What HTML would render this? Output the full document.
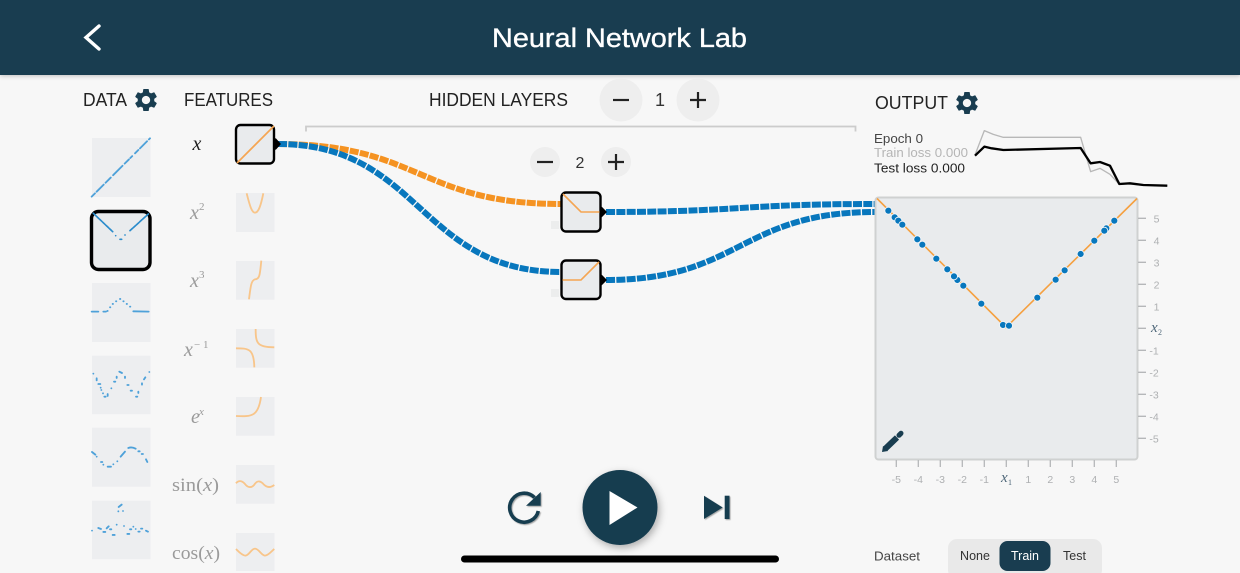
<!DOCTYPE html>
<html><head><meta charset="utf-8"><title>Neural Network Lab</title>
<style>
html,body{margin:0;padding:0;width:1240px;height:573px;overflow:hidden;background:#f7f7f7}
svg{display:block}
text{font-family:"Liberation Sans",sans-serif}
.m{font-family:"Liberation Serif",serif;font-style:italic;fill:#9a9a9a;font-size:20px}
.r{font-family:"Liberation Serif",serif;fill:#9a9a9a;font-size:19px}
.t{fill:#aeb0b2;font-size:10.5px;text-anchor:middle}
.h{fill:#222;font-size:18px}
.s{fill:#444;font-size:13px}
.w{fill:none;stroke-width:6;stroke-dasharray:9 1.3}
.c{fill:none;stroke:#f8c58a;stroke-width:5.5}
.d{fill:none;stroke:#4ea1d9;stroke-width:5.5;stroke-linecap:round}
</style></head><body>
<svg width="1240" height="573" viewBox="0 0 1240 573" xmlns="http://www.w3.org/2000/svg">
<defs>
<filter id="sh" x="-30%" y="-30%" width="160%" height="160%"><feDropShadow dx="2" dy="3" stdDeviation="4" flood-color="#000" flood-opacity=".3"/></filter>
<filter id="sm" x="-30%" y="-30%" width="160%" height="160%"><feDropShadow dx="1" dy="1" stdDeviation=".6" flood-color="#000" flood-opacity=".35"/></filter>
<path id="gear" d="M19.14,12.94c0.04-0.3,0.06-0.61,0.06-0.94c0-0.32-0.02-0.64-0.07-0.94l2.03-1.58c0.18-0.14,0.23-0.41,0.12-0.61l-1.92-3.32c-0.12-0.22-0.37-0.29-0.59-0.22l-2.39,0.96c-0.5-0.38-1.03-0.7-1.62-0.94L14.4,2.81c-0.04-0.24-0.24-0.41-0.48-0.41h-3.84c-0.24,0-0.43,0.17-0.47,0.41L9.25,5.35C8.66,5.59,8.12,5.92,7.63,6.29L5.24,5.33c-0.22-0.08-0.47,0-0.59,0.22L2.74,8.87C2.62,9.08,2.66,9.34,2.86,9.48l2.03,1.58C4.84,11.36,4.8,11.69,4.8,12s0.02,0.64,0.07,0.94l-2.03,1.58c-0.18,0.14-0.23,0.41-0.12,0.61l1.92,3.32c0.12,0.22,0.37,0.29,0.59,0.22l2.39-0.96c0.5,0.38,1.03,0.7,1.62,0.94l0.36,2.54c0.05,0.24,0.24,0.41,0.48,0.41h3.84c0.24,0,0.44-0.17,0.47-0.41l0.36-2.54c0.59-0.24,1.13-0.56,1.62-0.94l2.39,0.96c0.22,0.08,0.47,0,0.59-0.22l1.92-3.32c0.12-0.22,0.07-0.47-0.12-0.61L19.14,12.94z M12,15.6c-1.98,0-3.6-1.62-3.6-3.6s1.62-3.6,3.6-3.6s3.6,1.62,3.6,3.6S13.98,15.6,12,15.6z"/>
</defs>

<rect width="1240" height="573" fill="#f7f7f7"/>
<rect x="0" y="0" width="1240" height="75" fill="#193d50" style="filter:drop-shadow(0 1px 2px rgba(0,0,0,.22))"/>
<path d="M99,26 L86,37.500 L99,49" fill="none" stroke="#fff" stroke-width="3.400" stroke-linecap="round"/>
<text x="492" y="47" fill="#fff" font-size="27" stroke="#fff" stroke-width=".35" textLength="255" lengthAdjust="spacingAndGlyphs">Neural Network Lab</text>

<text class="h" x="83" y="106" textLength="44" lengthAdjust="spacingAndGlyphs">DATA</text>
<use href="#gear" fill="#193d50" transform="translate(132.200,86.200) scale(1.150)"/>
<text class="h" x="184" y="106" textLength="89" lengthAdjust="spacingAndGlyphs">FEATURES</text>
<text class="h" x="429" y="106" textLength="139" lengthAdjust="spacingAndGlyphs">HIDDEN LAYERS</text>
<text class="h" x="875" y="109" textLength="73" lengthAdjust="spacingAndGlyphs">OUTPUT</text>
<use href="#gear" fill="#193d50" transform="translate(953.200,89.200) scale(1.150)"/>

<!-- data thumbs -->
<g fill="#edeef0">
<rect x="92" y="138" width="58.500" height="59"/>
<rect x="92" y="283" width="58.500" height="59"/>
<rect x="92" y="355.700" width="58.500" height="58.500"/>
<rect x="92" y="427.700" width="58.500" height="59"/>
<rect x="92" y="500.700" width="58.500" height="58.500"/>
</g>
<rect x="91.500" y="211.500" width="58.500" height="58" rx="7" fill="#e9ebed" stroke="#000" stroke-width="3.400"/>
<g transform="translate(70,80) scale(.3333)">
<path class="d" stroke-width="4" stroke-dasharray="14 7 30 8 22 10 40 9 18 6 8 12" stroke-linecap="butt" d="M65,350 L240,175"/>
<path d="M70,400 L128,455 M137,467h.1 M150,478h5 M165,465h.1 M180,452 L235,402" fill="none" stroke="#2b8ccc" stroke-width="5" stroke-dasharray="10 3" stroke-linecap="round"/>
<path class="d" d="M65,695h20 M100,695h8 M112,693h1 M120,682h1 M128,672h1 M138,664h1 M150,657h1 M160,664h1 M170,672h1 M180,680h1 M190,694 L236,695"/>
</g>
<g transform="translate(70,320) scale(.3333)">
<path class="d" d="M70,161h.1 M80,175v6 M85,192h6 M92,203h.1 M94,210h.1 M99,220h.1 M103,230h4 M113,222v6 M124,205h.1 M132,185h4 M140,170v4 M148,155l8,4 M165,170v4 M172,195h4 M182,212h4 M198,230h4 M205,215v4 M216,190v4 M222,178l4,-6 M238,156h.1"/>
<path class="d" d="M66,396l10,8 M80,410h.1 M93,426h4 M100,434h.1 M113,440h10 M130,433h.1 M142,424h.1 M152,410 L165,395 M175,384 Q185,380 197,386 M205,394h4 M215,402h4 M228,418l4,8"/>
<path class="d" d="M66,632h.1 M85,624l8,3 M100,636h6 M110,625l6,-6 M120,628h4 M128,645h6 M140,614h.1 M162,618h.1 M172,642h6 M180,628h4 M190,620h.1 M197,627h.1 M205,635h4 M213,626h4 M228,632l6,3 M146,561l9,-7 M145,574h.1 M159,573h.1"/>
</g>

<!-- features -->
<text class="m" x="197" y="150" text-anchor="middle" style="fill:#222">x</text>
<text class="m" x="190" y="219">x</text><text class="r" x="199" y="210" style="font-size:11px">2</text>
<text class="m" x="190" y="287">x</text><text class="r" x="199" y="278" style="font-size:11px">3</text>
<text class="m" x="184" y="356">x</text><text class="r" x="194" y="348" style="font-size:11px">− 1</text>
<text class="m" x="191" y="423">e</text><text class="m" x="199" y="415" style="font-size:11px">x</text>
<text class="r" x="172" y="491" textLength="47" lengthAdjust="spacingAndGlyphs">sin(<tspan font-style="italic">x</tspan>)</text>
<text class="r" x="172" y="559" textLength="48" lengthAdjust="spacingAndGlyphs">cos(<tspan font-style="italic">x</tspan>)</text>

<g fill="#edeef0">
<rect x="236" y="193" width="38.500" height="39"/>
<rect x="236" y="261" width="38.500" height="38.700"/>
<rect x="236" y="329" width="38.500" height="38.700"/>
<rect x="236" y="397" width="38.500" height="38.700"/>
<rect x="236" y="465" width="38.500" height="38.700"/>
<rect x="236" y="533" width="38.500" height="38"/>
</g>
<g transform="translate(70,80) scale(.3333)">
<path class="c" d="M530,340 C540,380 546,398 555,398 C565,398 572,380 580,340"/>
<path class="c" d="M537,658 C542,620 543,602 555,598 C570,598 570,580 574,542"/>
</g>
<g transform="translate(70,320) scale(.3333)">
<path class="c" d="M498,85 C535,85 552,85 553,142"/>
<path class="c" d="M557,27 C557,70 562,82 613,82"/>
<path class="c" d="M498,288 C545,290 565,290 573,231"/>
<path class="c" d="M498,490 C506,480 516,482 525,492 C533,503 545,505 553,494 C562,480 572,482 582,494 C592,504 602,503 613,495"/>
<path class="c" d="M498,687 C506,695 516,706 526,707 C538,706 544,686 555,686 C566,686 574,706 585,707 C596,706 604,694 613,687"/>
</g>

<!-- bracket -->
<path d="M306,131.500V126.500H855.500V131.500" fill="none" stroke="#ccc" stroke-width="1.800"/>

<!-- stepper -->
<g fill="#eee"><circle cx="621" cy="100" r="21.500"/><circle cx="698" cy="100" r="21.500"/><circle cx="545" cy="162" r="15"/><circle cx="616" cy="162" r="15"/></g>
<g stroke="#222" stroke-width="2.200" fill="none">
<path d="M613,100H629"/><path d="M690,100H706M698,92V108"/>
<path d="M537,162H553"/><path d="M608,162H624M616,154V170"/>
</g>
<text x="660" y="106" font-size="18" fill="#333" text-anchor="middle">1</text>
<text x="580" y="168" font-size="16" fill="#333" text-anchor="middle">2</text>

<!-- wires -->
<path class="w" stroke="#f59322" d="M278,144 C420,144 420,204 561,204"/>
<path class="w" stroke="#0877bd" d="M278,144 C420,144 420,272 561,272"/>
<path class="w" stroke="#0877bd" d="M606,212 C740,212 740,204 875,204"/>
<path class="w" stroke="#0877bd" d="M606,280 C740,280 740,212 875,212"/>

<!-- x node -->
<rect x="236" y="125" width="38" height="38.500" rx="4.500" fill="#e9ebed" stroke="#000" stroke-width="2.400"/>
<path d="M237,163 L274,126" stroke="#f5a552" stroke-width="1.700"/>
<path d="M275.500,139 L280,144 L275.500,149Z" fill="#000" stroke="#000" stroke-width="1.500" stroke-linejoin="round"/>

<!-- hidden nodes -->
<rect x="551" y="221" width="8" height="8" fill="#eceded"/>
<rect x="551" y="289" width="8" height="8" fill="#eceded"/>
<rect x="561.500" y="192.500" width="39" height="39" rx="4.500" fill="#e9ebed" stroke="#000" stroke-width="2.400"/>
<rect x="561.500" y="260.500" width="39" height="38.500" rx="4.500" fill="#e9ebed" stroke="#000" stroke-width="2.400"/>
<path d="M563,194 L581,212 H599.500" fill="none" stroke="#f5a552" stroke-width="1.600"/>
<path d="M562.500,280 H581 L599,262" fill="none" stroke="#f5a552" stroke-width="1.600"/>
<path d="M601.500,207.500 L606,212 L601.500,216.500Z M601.500,275.500 L606,280 L601.500,284.500Z" fill="#000" stroke="#000" stroke-width="1.500" stroke-linejoin="round"/>

<!-- output chart -->
<text class="s" x="874" y="143" textLength="49" lengthAdjust="spacingAndGlyphs">Epoch 0</text>
<text class="s" x="874" y="157" textLength="94" lengthAdjust="spacingAndGlyphs" style="fill:#b5b5b5">Train loss 0.000</text>
<text class="s" x="874" y="172.500" textLength="91" lengthAdjust="spacingAndGlyphs" style="fill:#222">Test loss 0.000</text>
<g transform="translate(860,85) scale(.3333)" fill="none" stroke-linejoin="round">
<path stroke="#b8b8b8" stroke-width="4" d="M345,210 L373,137 L400,148 L430,157 L662,157 L692,260 L720,250 L750,268 L778,298 L800,296 L840,300 L922,302"/>
<path stroke="#000" stroke-width="7" d="M345,212 L373,185 L395,190 L430,195 L662,189 L692,235 L720,231 L750,242 L778,297 L810,295 L850,300 L922,302"/>
</g>

<!-- plot -->
<rect x="875.500" y="197.500" width="262" height="262" rx="3" fill="#e9ebed" stroke="#cfd1d1" stroke-width="2"/>
<path d="M877,198.500 L1006,327.500 L1137,198.500" fill="none" stroke="#f5a040" stroke-width="1.600"/>
<g transform="translate(860,195) scale(.3333)" fill="#0877bd" stroke="#f4f6f8" stroke-width="2.500">
<circle cx="85" cy="47" r="10.500"/><circle cx="104" cy="67" r="10.500"/><circle cx="115" cy="77" r="10.500"/><circle cx="127" cy="89" r="10.500"/><circle cx="187" cy="149" r="10.500"/><circle cx="172" cy="133" r="10.500"/><circle cx="229" cy="191" r="10.500"/><circle cx="262" cy="223" r="10.500"/><circle cx="292" cy="255" r="10.500"/><circle cx="282" cy="244" r="10.500"/><circle cx="310" cy="272" r="10.500"/><circle cx="364" cy="326" r="10.500"/><circle cx="429" cy="390" r="10.500"/><circle cx="447" cy="392" r="10.500"/><circle cx="532" cy="308" r="10.500"/><circle cx="587" cy="254" r="10.500"/><circle cx="614" cy="226" r="10.500"/><circle cx="662" cy="177" r="10.500"/><circle cx="703" cy="137" r="10.500"/><circle cx="739" cy="100" r="10.500"/><circle cx="733" cy="107" r="10.500"/><circle cx="763" cy="77" r="10.500"/>
</g>
<!-- pencil -->
<path d="M885,449 L897,437.500" stroke="#193d50" stroke-width="6"/>
<path d="M899,435.300 L901,433.300" stroke="#193d50" stroke-width="5" stroke-linecap="round"/>
<path d="M882,452 L883,446 L888,451Z" fill="#193d50"/>

<!-- axes -->
<g stroke="#b5b7b9" stroke-width="1.300">
<path d="M896.300,460V467M918.300,460V467M940.300,460V467M962.300,460V467M984.300,460V467M1006.300,460V467M1028.300,460V467M1050.300,460V467M1072.300,460V467M1094.300,460V467M1116.300,460V467"/>
<path d="M1138,218.300H1146M1138,240.300H1146M1138,262.300H1146M1138,284.300H1146M1138,306.300H1146M1138,328.300H1146M1138,350.300H1146M1138,372.300H1146M1138,394.300H1146M1138,416.300H1146M1138,438.300H1146"/>
</g>
<g>
<text class="t" x="896.300" y="483">-5</text><text class="t" x="918.300" y="483">-4</text><text class="t" x="940.300" y="483">-3</text><text class="t" x="962.300" y="483">-2</text><text class="t" x="984.300" y="483">-1</text>
<text class="t" x="1028.300" y="483">1</text><text class="t" x="1050.300" y="483">2</text><text class="t" x="1072.300" y="483">3</text><text class="t" x="1094.300" y="483">4</text><text class="t" x="1116.300" y="483">5</text>
<text class="t" x="1156.500" y="222.500">5</text><text class="t" x="1156.500" y="244.500">4</text><text class="t" x="1156.500" y="266.500">3</text><text class="t" x="1156.500" y="288.500">2</text><text class="t" x="1156.500" y="310.500">1</text>
<text class="t" x="1154" y="354.500">-1</text><text class="t" x="1154" y="376.500">-2</text><text class="t" x="1154" y="398.500">-3</text><text class="t" x="1154" y="420.500">-4</text><text class="t" x="1154" y="442.500">-5</text>
</g>
<text class="m" x="1001" y="482" style="fill:#50687a;font-size:15px">x</text><text class="r" x="1008" y="485" style="fill:#50687a;font-size:8px">1</text>
<text class="m" x="1151" y="332" style="fill:#50687a;font-size:15px">x</text><text class="r" x="1158" y="335" style="fill:#50687a;font-size:8px">2</text>

<!-- controls -->
<g filter="url(#sm)">
<path d="M534.500,497.500 A14.500,14.500 0 1 0 538.300,511" fill="none" stroke="#193d50" stroke-width="3.600"/>
<path d="M540.700,492 V505.700 H526Z" fill="#193d50"/>
</g>
<circle cx="620" cy="507.500" r="37.500" fill="#193d50" filter="url(#sh)"/>
<path d="M609.500,491 L637.500,507.500 L609.500,525Z" fill="#fff"/>
<g filter="url(#sm)" fill="#193d50">
<path d="M704,495.700 L722.700,507.500 L704,519Z"/>
<rect x="724.700" y="495.700" width="4.800" height="23.300"/>
</g>
<rect x="461" y="555.500" width="318" height="7" rx="3.500" fill="#000"/>

<!-- dataset -->
<text x="874" y="560.500" font-size="13" fill="#444" textLength="46" lengthAdjust="spacingAndGlyphs">Dataset</text>
<rect x="948" y="539" width="154" height="40" rx="9" fill="#e9e9e9"/>
<rect x="999.500" y="541" width="51" height="30" rx="8" fill="#193d50"/>
<text x="975" y="560" font-size="12.500" fill="#333" text-anchor="middle">None</text>
<text x="1025" y="560" font-size="12.500" fill="#fff" text-anchor="middle">Train</text>
<text x="1074.500" y="560" font-size="12.500" fill="#333" text-anchor="middle">Test</text>
</svg>
</body></html>
